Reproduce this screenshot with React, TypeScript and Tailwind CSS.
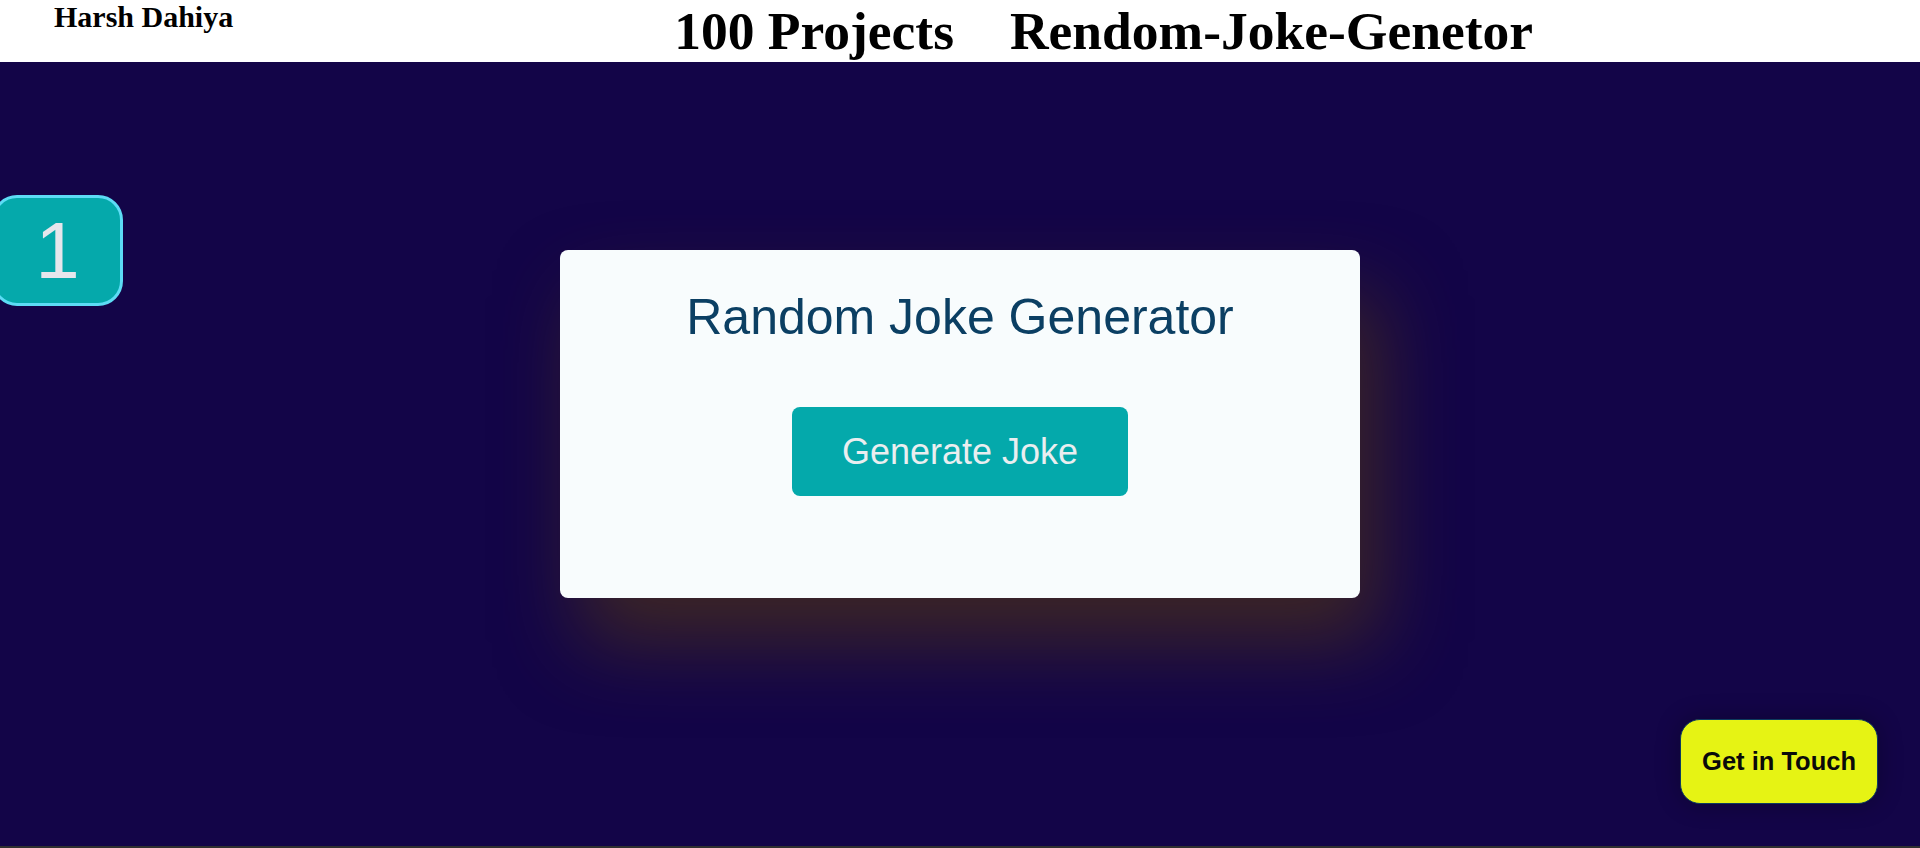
export default function App() {
  const serif = { fontFamily: '"Liberation Serif", "Times New Roman", serif' }

  return (
    <div
      className="h-[848px] w-full flex flex-col overflow-hidden bg-[#130548]"
      style={{ fontFamily: '"Liberation Sans", Arial, sans-serif' }}
    >
      {/* HEADER */}
      <header className="h-[62px] shrink-0 bg-white flex items-start text-black" style={serif}>
        <h2 className="ml-[54px] pt-[2px] text-[30px] font-bold leading-none">Harsh Dahiya</h2>
        <h1 className="ml-[441px] pt-[5px] flex gap-[56px] text-[53.5px] font-bold leading-none whitespace-nowrap">
          <span>100 Projects</span>
          <span>Rendom-Joke-Genetor</span>
        </h1>
      </header>

      {/* CONTENT */}
      <main className="relative flex-1 flex flex-col items-center">
        <div className="absolute left-[-8px] top-[133px] w-[131px] h-[111px] rounded-[25px] border-[3px] border-[#5ddcf5] bg-[#05a9ab] flex items-center justify-center">
          <span className="text-[80px] leading-[1.15] text-[#e6e6ec]">1</span>
        </div>

        <div className="mt-[188px] w-[800px] h-[348px] rounded-lg bg-[#f8fcfd] flex flex-col items-center pt-[39px] shadow-[20px_45px_80px_rgba(75,50,25,0.75)]">
          <h1 className="text-[50px] leading-[1.15] text-[#0b3f63]">Random Joke Generator</h1>
          <button className="mt-[60px] px-[50px] py-[24px] rounded-lg bg-[#04a9ab] text-[36px] leading-[1.15] text-[#eaeef0]">
            Generate Joke
          </button>
        </div>

        <button className="absolute right-[42px] bottom-[42px] px-[21px] py-[27px] rounded-[20px] border border-[#0d3b5e] bg-[#e6f314] text-[25.5px] font-bold leading-[1.15] text-[#0a0a0a] shadow-[0_0_24px_rgba(0,0,0,0.3)]">
          Get in Touch
        </button>
      </main>

      <div className="h-[2px] shrink-0 bg-[#303030]" />
    </div>
  )
}
